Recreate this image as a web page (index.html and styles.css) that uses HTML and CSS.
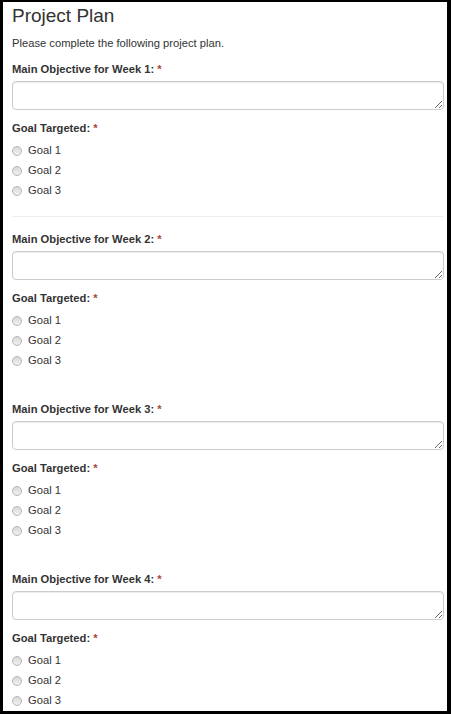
FILE: index.html
```html
<!DOCTYPE html>
<html lang="en">
<head>
<meta charset="utf-8">
<title>Project Plan</title>
<link rel="stylesheet" href="styles.css">
</head>
<body>
<main class="page">
  <h1 class="title">Project Plan</h1>
  <p class="intro">Please complete the following project plan.</p>

  <section class="week">
    <label class="field-label" for="w1">Main Objective for Week 1: <span class="req">*</span></label>
    <textarea class="field-input" id="w1"></textarea>
    <div class="field-label goal-label">Goal Targeted: <span class="req">*</span></div>
    <div class="options">
      <label class="option"><input type="radio" name="g1" class="radio"><span>Goal 1</span></label>
      <label class="option"><input type="radio" name="g1" class="radio"><span>Goal 2</span></label>
      <label class="option"><input type="radio" name="g1" class="radio"><span>Goal 3</span></label>
    </div>
    <hr class="sep">
  </section>

  <section class="week">
    <label class="field-label" for="w2">Main Objective for Week 2: <span class="req">*</span></label>
    <textarea class="field-input" id="w2"></textarea>
    <div class="field-label goal-label">Goal Targeted: <span class="req">*</span></div>
    <div class="options">
      <label class="option"><input type="radio" name="g2" class="radio"><span>Goal 1</span></label>
      <label class="option"><input type="radio" name="g2" class="radio"><span>Goal 2</span></label>
      <label class="option"><input type="radio" name="g2" class="radio"><span>Goal 3</span></label>
    </div>
    <hr class="sep sep-hidden">
  </section>

  <section class="week">
    <label class="field-label" for="w3">Main Objective for Week 3: <span class="req">*</span></label>
    <textarea class="field-input" id="w3"></textarea>
    <div class="field-label goal-label">Goal Targeted: <span class="req">*</span></div>
    <div class="options">
      <label class="option"><input type="radio" name="g3" class="radio"><span>Goal 1</span></label>
      <label class="option"><input type="radio" name="g3" class="radio"><span>Goal 2</span></label>
      <label class="option"><input type="radio" name="g3" class="radio"><span>Goal 3</span></label>
    </div>
    <hr class="sep sep-hidden">
  </section>

  <section class="week">
    <label class="field-label" for="w4">Main Objective for Week 4: <span class="req">*</span></label>
    <textarea class="field-input" id="w4"></textarea>
    <div class="field-label goal-label">Goal Targeted: <span class="req">*</span></div>
    <div class="options">
      <label class="option"><input type="radio" name="g4" class="radio"><span>Goal 1</span></label>
      <label class="option"><input type="radio" name="g4" class="radio"><span>Goal 2</span></label>
      <label class="option"><input type="radio" name="g4" class="radio"><span>Goal 3</span></label>
    </div>
  </section>
</main>
</body>
</html>
```

FILE: styles.css
```css
html, body {
  margin: 0;
  padding: 0;
  background: #000;
}

.page {
  box-sizing: border-box;
  width: 451px;
  height: 714px;
  overflow: hidden;
  background: #fff;
  border-style: solid;
  border-color: #000;
  border-width: 2px 4px 3px 3px;
  padding: 3px 3px 0 9px;
  font-family: "Liberation Sans", Arial, sans-serif;
  font-size: 11.2px;
  color: #333;
}

.title {
  margin: 0;
  font-size: 19px;
  line-height: 22px;
  font-weight: normal;
  color: #333;
}

.intro {
  margin: 8px 0 0;
  line-height: 17px;
}

.week {
  display: flex;
  flex-direction: column;
  padding-top: 9px;
}

.field-label {
  display: block;
  font-weight: bold;
  line-height: 17px;
}

.req {
  color: #a94442;
}

.field-input {
  box-sizing: border-box;
  display: block;
  width: 100%;
  height: 29px;
  margin: 3px 0 0;
  border: 1px solid #ccc;
  border-radius: 4px;
  box-shadow: inset 0 1px 1px rgba(0, 0, 0, .075);
  font: inherit;
  padding: 4px 8px;
  resize: vertical;
}

.goal-label {
  margin-top: 10px;
}

.options {
  display: flex;
  flex-direction: column;
  margin-top: 3px;
}

.option {
  display: flex;
  align-items: center;
  height: 20px;
  line-height: 20px;
}

.radio {
  appearance: none;
  -webkit-appearance: none;
  box-sizing: border-box;
  width: 10px;
  height: 10px;
  margin: 2px 6px 0 0;
  border: 1px solid #b5b5b5;
  border-radius: 50%;
  background: linear-gradient(#d9d9d9, #f1f1f1);
  flex: none;
}

.sep {
  margin: 16px 0 5px;
  border: 0;
  border-top: 1px solid #eee;
  height: 0;
  width: 100%;
}

.sep-hidden {
  border-top-color: transparent;
}
```
